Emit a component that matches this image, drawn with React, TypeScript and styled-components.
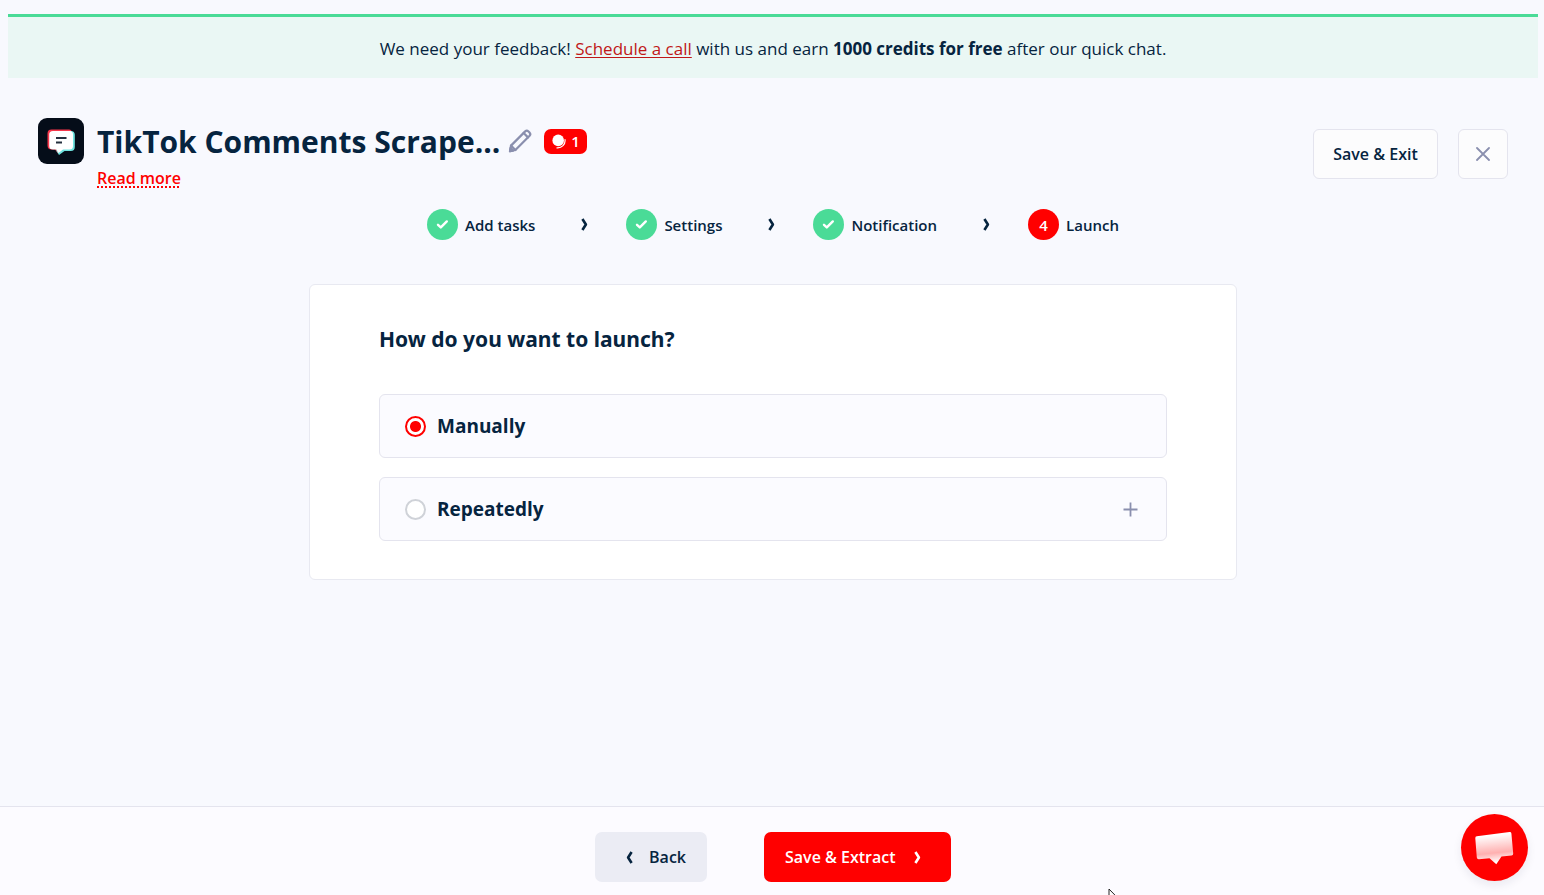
import React, { useState } from "react";
import styled, { createGlobalStyle } from "styled-components";

const ink = "#06243f";
const red = "#ff0000";
const green = "#4adb97";
const muted = "#8a8fae";
const line = "#e4e4ee";

const GlobalStyle = createGlobalStyle`
  *, *::before, *::after { box-sizing: border-box; }
  body {
    margin: 0;
    background: #f8f9fe;
    color: ${ink};
    font-family: "Segoe UI", "Open Sans", "Noto Sans", sans-serif;
    font-size: 16px;
    line-height: 24px;
  }
  button { font: inherit; color: inherit; cursor: pointer; }
  svg { display: block; flex: none; }
`;

const Page = styled.div`
  display: flex;
  flex-direction: column;
  min-height: 100vh;
`;

const Content = styled.main`
  flex: 1;
  padding: 14px 6px 24px 8px;
`;

const Banner = styled.aside`
  padding: 20px 16px 17px;
  border-top: 3px solid ${green};
  background: #eaf7f4;
  font-size: 17px;
  text-align: center;
`;

const BannerLink = styled.a`
  color: #c01818;
  text-decoration: underline;
  text-underline-offset: 2px;
`;

const Header = styled.header`
  display: flex;
  align-items: flex-start;
  padding: 40px 30px 0;
`;

const HeaderText = styled.div`
  flex: 1;
  min-width: 0;
  padding-left: 13px;
`;

const TitleRow = styled.div`
  display: flex;
  align-items: center;
  height: 46px;
`;

const Title = styled.h1`
  margin: 0;
  font-size: 30px;
  line-height: 44px;
  padding-top: 2px;
  font-weight: 700;
  white-space: nowrap;
`;

const EditButton = styled.button`
  margin-left: 7px;
  padding: 0;
  border: 0;
  background: none;
  color: ${muted};
`;

const CreditBadge = styled.span`
  display: flex;
  align-items: center;
  gap: 5px;
  height: 25px;
  margin-left: 11px;
  padding: 0 7px 0 8px;
  border-radius: 7px;
  background: ${red};
  color: #fff;
  font-size: 15px;
  font-weight: 600;
`;

const ReadMore = styled.a`
  display: inline-block;
  margin-top: 2px;
  color: ${red};
  font-weight: 600;
  text-decoration: underline dotted 2px;
  text-underline-offset: 2px;
`;

const Actions = styled.div`
  display: flex;
  gap: 20px;
  padding-top: 11px;
`;

const OutlineButton = styled.button<{ $square?: boolean }>`
  display: flex;
  align-items: center;
  justify-content: center;
  width: ${(p) => (p.$square ? 50 : 125)}px;
  height: 50px;
  padding: 0;
  border: 1px solid ${line};
  border-radius: 6px;
  background: #fcfcfd;
  color: ${(p) => (p.$square ? muted : ink)};
  font-weight: 600;
`;

const Steps = styled.ol`
  display: flex;
  justify-content: center;
  align-items: center;
  margin: 19px 0 44px;
  padding: 0;
  list-style: none;
`;

const Step = styled.li`
  display: flex;
  align-items: center;
  font-size: 15px;
  font-weight: 600;
`;

const StepMark = styled.span<{ $current?: boolean }>`
  display: flex;
  align-items: center;
  justify-content: center;
  width: 31px;
  height: 31px;
  margin-right: 7px;
  border-radius: 50%;
  background: ${(p) => (p.$current ? red : green)};
  color: #fff;
`;

const StepArrow = styled.span`
  margin: 0 38px 0 46px;
`;

const Card = styled.section`
  max-width: 928px;
  margin: 0 auto;
  padding: 38px 69px;
  border: 1px solid #e8e9f1;
  border-radius: 6px;
  background: #fff;
`;

const CardTitle = styled.h2`
  margin: 0 0 39px;
  font-family: "Segoe UI", "Noto Sans", sans-serif;
  font-size: 21px;
  line-height: 32px;
  font-weight: 700;
`;

const Options = styled.div`
  display: grid;
  gap: 19px;
`;

const Option = styled.label`
  display: flex;
  align-items: center;
  height: 64px;
  padding: 0 28px 0 25px;
  border: 1px solid ${line};
  border-radius: 6px;
  background: #fbfbff;
  color: ${ink};
  font-size: 19px;
  font-weight: 700;
  cursor: pointer;

  & > svg {
    margin-left: auto;
    color: ${muted};
  }
`;

const Radio = styled.input`
  appearance: none;
  width: 21px;
  height: 21px;
  margin: 0 11px 0 0;
  border: 2px solid #cfd2d8;
  border-radius: 50%;
  background: #fff;

  &:checked {
    border-color: ${red};
    background: radial-gradient(circle, ${red} 5px, #fff 6px);
  }
`;

const Footer = styled.footer`
  position: sticky;
  bottom: 0;
  display: flex;
  justify-content: center;
  gap: 57px;
  padding: 25px 6px 13px 8px;
  border-top: 1px solid ${line};
  background: #fcfbff;
`;

const FooterButton = styled.button<{ $primary?: boolean }>`
  display: flex;
  align-items: center;
  justify-content: ${(p) => (p.$primary ? "flex-start" : "flex-end")};
  gap: ${(p) => (p.$primary ? 18 : 16)}px;
  width: ${(p) => (p.$primary ? 187 : 112)}px;
  height: 50px;
  padding: 0 21px;
  border: 0;
  border-radius: 7px;
  background: ${(p) => (p.$primary ? red : "#ebecf4")};
  color: ${(p) => (p.$primary ? "#fff" : ink)};
  font-weight: 600;
`;

const ChatButton = styled.button`
  position: fixed;
  right: 16px;
  bottom: 14px;
  display: flex;
  align-items: center;
  justify-content: center;
  width: 67px;
  height: 67px;
  padding: 0;
  border: 0;
  border-radius: 50%;
  background: ${red};
  box-shadow: 0 4px 10px rgba(20, 20, 60, 0.08);
`;

const Pointer = styled.svg`
  position: fixed;
  left: 1108px;
  bottom: -12px;
  pointer-events: none;
`;

const Chevron = ({ left = false }: { left?: boolean }) => (
  <svg width="7" height="13" viewBox="0 0 7 13" fill="none" stroke="currentColor" strokeWidth="2.6" strokeLinejoin="round" aria-hidden="true">
    <path d={left ? "M5.6 1 L2.1 6.5 L5.6 12" : "M1.4 1 L4.9 6.5 L1.4 12"} />
  </svg>
);

const Check = () => (
  <svg width="13" height="11" viewBox="0 0 13 11" fill="none" stroke="currentColor" strokeWidth="2.4" strokeLinecap="round" strokeLinejoin="round" aria-hidden="true">
    <path d="M2 5.8 L4.8 8.4 L10.8 2.4" />
  </svg>
);

const AppLogo = () => (
  <svg width="46" height="46" viewBox="0 0 46 46" aria-hidden="true">
    <rect width="46" height="46" rx="9" fill="#050d19" />
    <path d="M13.500 11.500 H31 Q34 11.500 34 15 V27 Q34 31 30 31 H26 L20 35.500 L17 31.500 H13.500 Q9.500 31.500 9.500 27.500 V15.500 Q9.500 11.500 13.500 11.500Z" fill="#f7374b" />
    <path d="M16 13 H33 Q36.800 13 36.800 16.800 V29 Q36.800 33 32.800 33 H26.500 L21 37 L18.500 33 Z" fill="#6fe3df" />
    <path d="M15 13 H31.500 Q35 13 35 16.500 V28 Q35 31.500 31.500 31.500 H25 L20.500 35 L18.500 31.500 H15 Q11.200 31.500 11.200 28 V16.500 Q11.200 13 15 13Z" fill="#fff" />
    <path d="M18 20 H28.500 M18 24.500 H24" stroke="#25303e" strokeWidth="2" fill="none" />
  </svg>
);

const Pencil = () => (
  <svg width="26" height="26" viewBox="0 0 26 26" fill="none" stroke="currentColor" strokeWidth="2.200" strokeLinejoin="round" strokeLinecap="round" aria-hidden="true">
    <path d="M3 23.200 L4 17.600 L18.200 3.400 Q19.800 1.900 21.500 3.500 L22.500 4.500 Q24.100 6.200 22.600 7.800 L8.400 22 Z" />
    <path d="M4 17.600 L8.400 22 M16.600 5 L21 9.400" />
    <path d="M3 23.200 L3.500 20 L6 22.600Z" fill="currentColor" />
  </svg>
);

const Coins = () => (
  <svg width="14" height="15" viewBox="0 0 14 15" fill="none" aria-hidden="true">
    <circle cx="6.200" cy="6.400" r="5.800" fill="#fff" />
    <path d="M13 5.500 A7.400 7.400 0 0 1 5 13.900" stroke="#fff" strokeWidth="1.200" strokeLinecap="round" />
  </svg>
);

const Cross = () => (
  <svg width="14" height="14" viewBox="0 0 14 14" stroke="currentColor" strokeWidth="1.800" strokeLinecap="round" aria-hidden="true">
    <path d="M1 1 L13 13 M13 1 L1 13" />
  </svg>
);

const Plus = () => (
  <svg width="15" height="15" viewBox="0 0 15 15" stroke="currentColor" strokeWidth="1.800" aria-hidden="true">
    <path d="M7.500 0.500 V14.500 M0.500 7.500 H14.500" />
  </svg>
);

const ChatBubble = () => (
  <svg width="40" height="34" viewBox="0 0 40 34" aria-hidden="true">
    <defs>
      <linearGradient id="bubble" x1="0" y1="0" x2="0.120" y2="1">
        <stop offset="0.150" stopColor="#fff" />
        <stop offset="0.700" stopColor="#ffb0b0" />
        <stop offset="1" stopColor="#fff" />
      </linearGradient>
    </defs>
    <path d="M1.800 5.200 L34.500 1 Q36.200 0.800 36.400 2.400 L38.200 22.500 Q38.300 24.300 36.500 24.500 L26.500 25.600 L21.300 33.200 L14.500 27.200 L4 28.300 Q2 28.500 1.800 26.500 L0.300 7.200 Q0.200 5.400 1.800 5.200Z" fill="url(#bubble)" />
  </svg>
);

const steps = ["Add tasks", "Settings", "Notification", "Launch"];

export default function App() {
  const [mode, setMode] = useState("manual");

  return (
    <Page>
      <GlobalStyle />
      <Content>
        <Banner>
          We need your feedback! <BannerLink href="#call">Schedule a call</BannerLink> with us and earn{" "}
          <strong>1000 credits for free</strong> after our quick chat.
        </Banner>

        <Header>
          <AppLogo />
          <HeaderText>
            <TitleRow>
              <Title>TikTok Comments Scrape...</Title>
              <EditButton type="button" aria-label="Rename"><Pencil /></EditButton>
              <CreditBadge><Coins />1</CreditBadge>
            </TitleRow>
            <ReadMore href="#more">Read more</ReadMore>
          </HeaderText>
          <Actions>
            <OutlineButton type="button">Save &amp; Exit</OutlineButton>
            <OutlineButton type="button" $square aria-label="Close"><Cross /></OutlineButton>
          </Actions>
        </Header>

        <Steps>
          {steps.map((name, i) => {
            const current = i === steps.length - 1;
            return (
              <Step key={name} aria-current={current ? "step" : undefined}>
                <StepMark $current={current}>{current ? i + 1 : <Check />}</StepMark>
                {name}
                {!current && <StepArrow><Chevron /></StepArrow>}
              </Step>
            );
          })}
        </Steps>

        <Card>
          <CardTitle>How do you want to launch?</CardTitle>
          <Options role="radiogroup" aria-label="Launch mode">
            <Option htmlFor="manual">
              <Radio type="radio" id="manual" name="mode" checked={mode === "manual"} onChange={() => setMode("manual")} />
              Manually
            </Option>
            <Option htmlFor="repeat">
              <Radio type="radio" id="repeat" name="mode" checked={mode === "repeat"} onChange={() => setMode("repeat")} />
              Repeatedly
              <Plus />
            </Option>
          </Options>
        </Card>
      </Content>

      <Footer>
        <FooterButton type="button"><Chevron left />Back</FooterButton>
        <FooterButton type="button" $primary>Save &amp; Extract<Chevron /></FooterButton>
      </Footer>

      <ChatButton type="button" aria-label="Open chat"><ChatBubble /></ChatButton>
      <Pointer width="13" height="19" viewBox="0 0 13 19" aria-hidden="true">
        <path d="M1 1 V16 L4.500 12.500 L7 18 L9 17 L6.700 11.800 H11.500 Z" fill="#fff" stroke="#222" />
      </Pointer>
    </Page>
  );
}
